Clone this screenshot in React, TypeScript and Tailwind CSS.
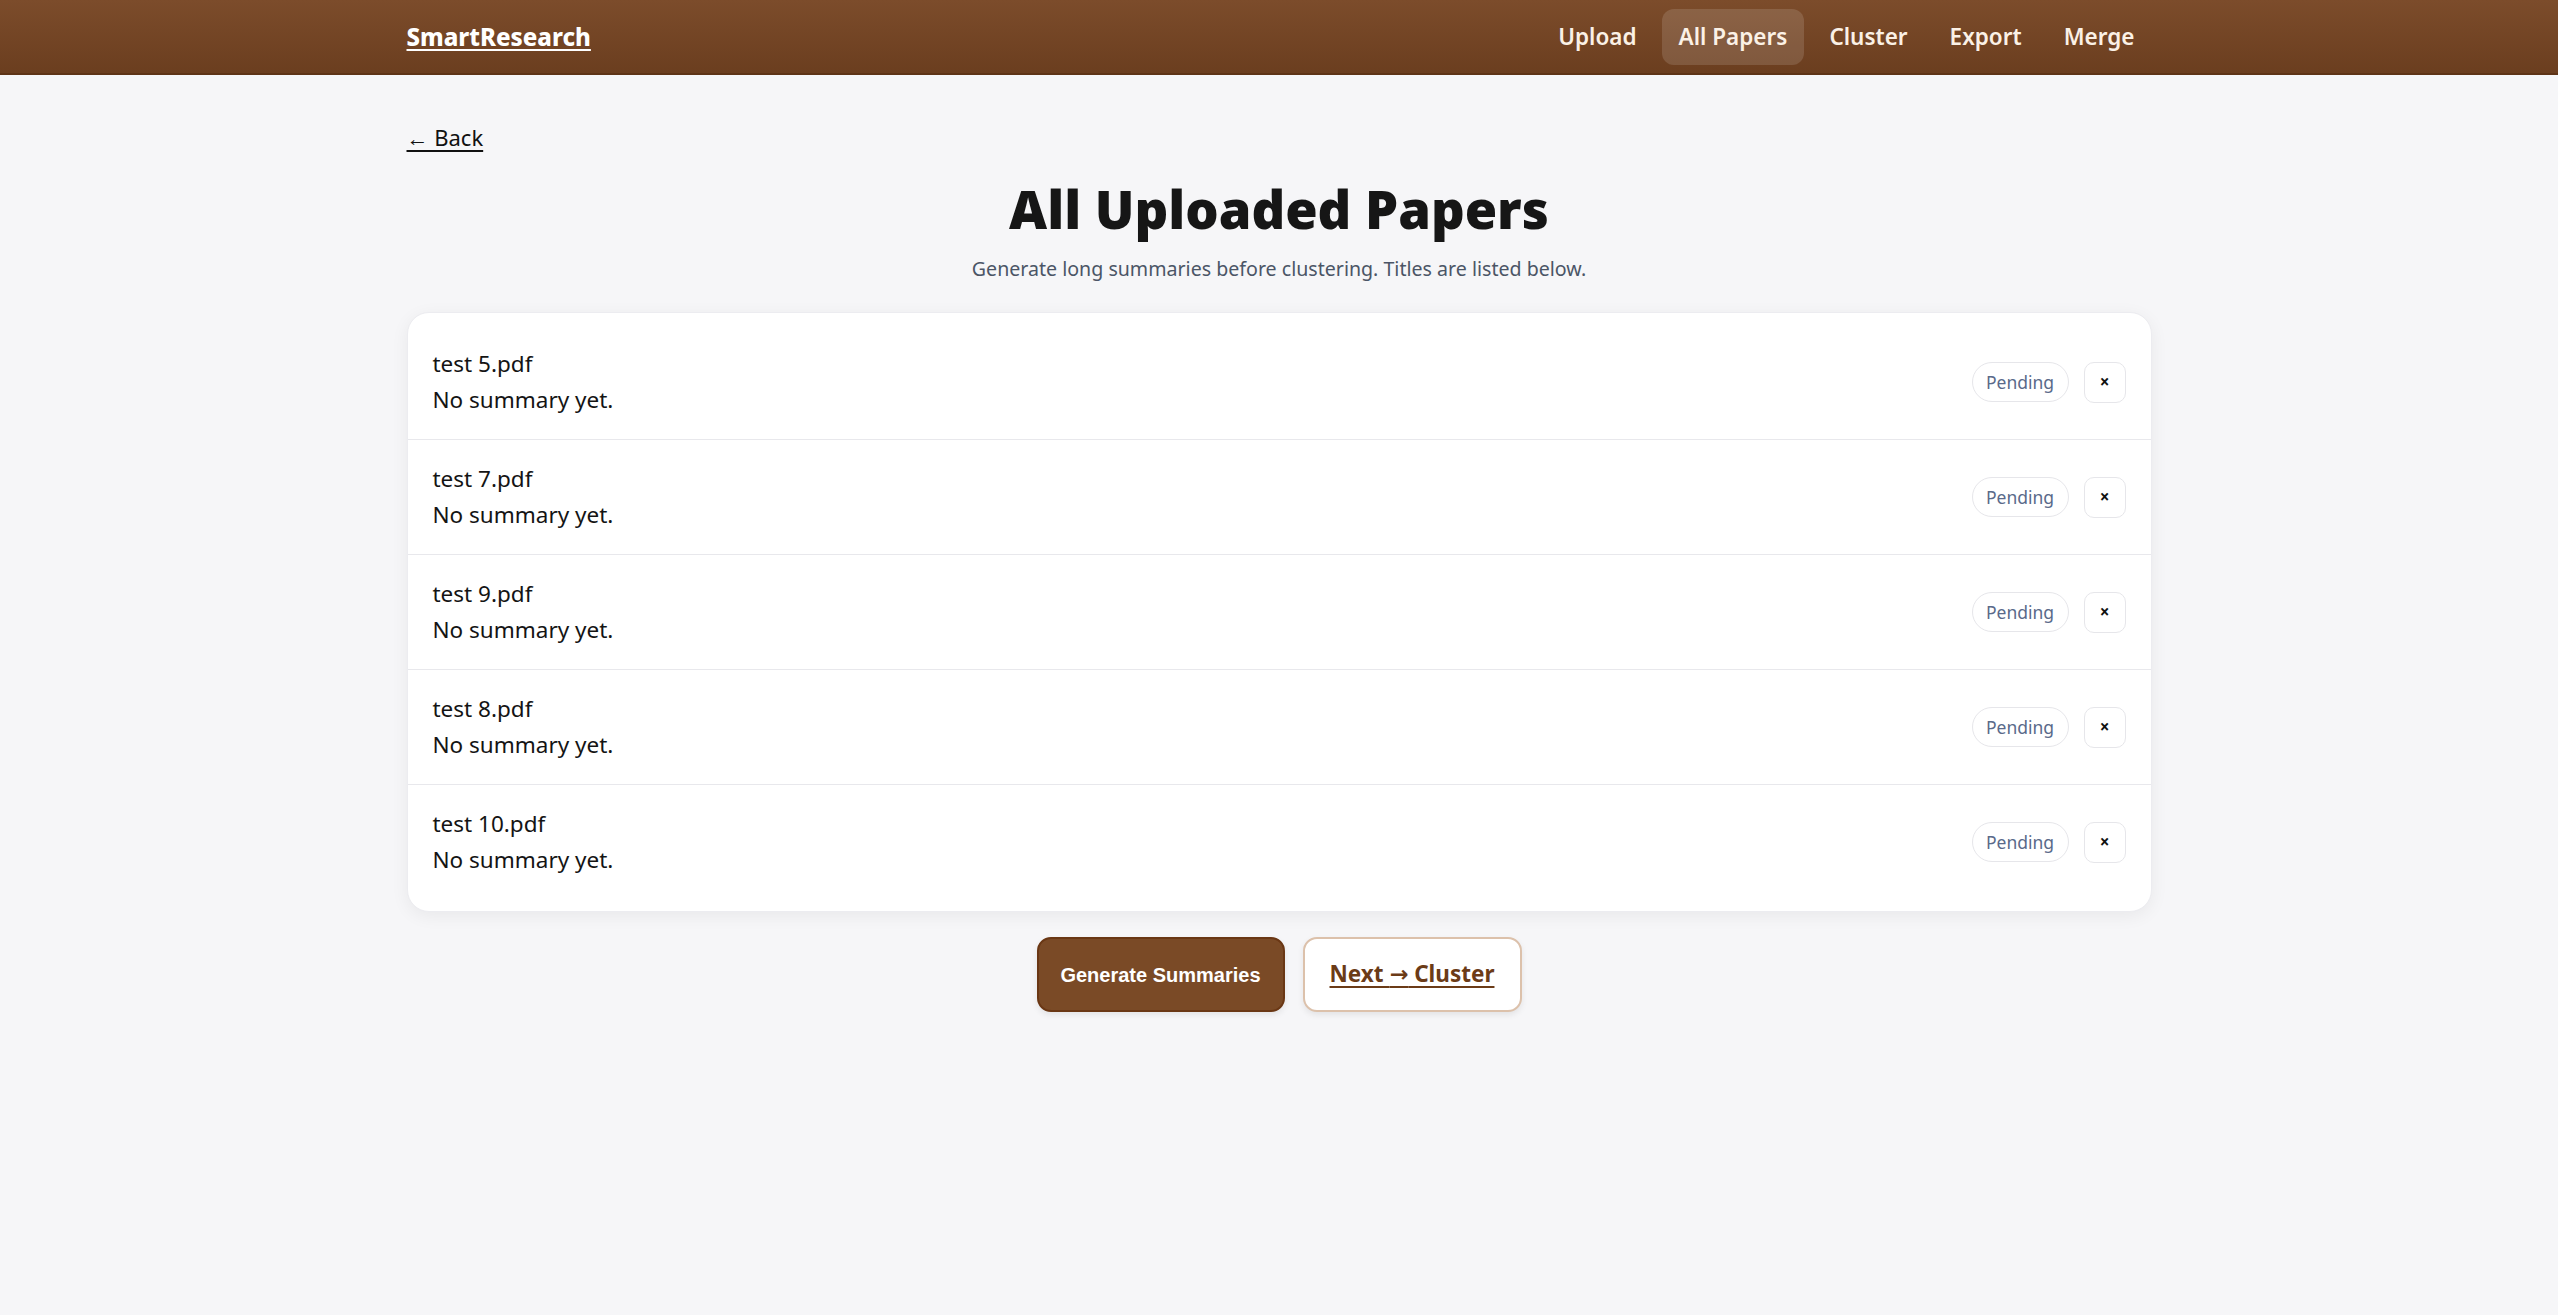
import React from "react";

const navItems = ["Upload", "All Papers", "Cluster", "Export", "Merge"];

const papers = [
  { name: "test 5.pdf", summary: "No summary yet.", status: "Pending" },
  { name: "test 7.pdf", summary: "No summary yet.", status: "Pending" },
  { name: "test 9.pdf", summary: "No summary yet.", status: "Pending" },
  { name: "test 8.pdf", summary: "No summary yet.", status: "Pending" },
  { name: "test 10.pdf", summary: "No summary yet.", status: "Pending" },
];

const PaperRow = ({
  name,
  summary,
  status,
  last,
}: {
  name: string;
  summary: string;
  status: string;
  last: boolean;
}) => {
  return (
    <div
      className={`flex items-center justify-between px-[25px] py-[21px] ${
        last ? "" : "border-b border-[#e8e8ec]"
      }`}
    >
      <div className="text-[22.5px] leading-[36px] text-[#141414]">
        <div>{name}</div>
        <div>{summary}</div>
      </div>

      <div className="flex items-center gap-[15px]">
        <span className="flex h-[40px] w-[97px] items-center justify-center rounded-full border border-[#e6e6ea] text-[17.5px] text-[#5a6a8a]">
          {status}
        </span>
        <button className="flex h-[41px] w-[42px] items-center justify-center rounded-[10px] border border-[#e6e6ea] bg-white text-[17px] font-bold text-[#111]">
          ×
        </button>
      </div>
    </div>
  );
};

export default function App() {
  return (
    <div className="min-h-screen bg-[#f6f6f8] font-['Noto_Sans',_'Open_Sans',sans-serif]">
      {/* Top bar */}
      <header className="h-[75px] border-b-2 border-[#5e3417] bg-gradient-to-b from-[#7c4c2b] to-[#6b3e1f]">
        <div className="mx-auto flex h-full w-[1745px] items-center justify-between">
          <a className="text-[24px] font-extrabold text-white underline underline-offset-[3px]">
            SmartResearch
          </a>

          <nav className="flex items-center gap-[8px]">
            {navItems.map((item) => (
              <a
                key={item}
                className={`rounded-[12px] px-[17px] py-[13px] text-[22.5px] font-semibold leading-[30px] text-[#fbf1e6] ${
                  item === "All Papers" ? "bg-white/[0.13]" : ""
                }`}
              >
                {item}
              </a>
            ))}
          </nav>
        </div>
      </header>

      <main className="mx-auto w-[1745px]">
        <a className="mt-[46px] inline-block text-[22px] leading-[33px] text-[#111] underline underline-offset-[4px]">
          ← Back
        </a>

        <h1 className="mt-[24px] text-center text-[52.5px] font-black leading-[62px] text-[#161616]">
          All Uploaded Papers
        </h1>
        <p className="mt-[14px] text-center text-[19.6px] leading-[30px] text-[#4b5566]">
          Generate long summaries before clustering. Titles are listed below.
        </p>

        {/* Papers list */}
        <div className="mt-[28px] rounded-[22px] border border-[#ececf0] bg-white py-[12px] shadow-[0_4px_18px_rgba(0,0,0,0.06)]">
          {papers.map((p, i) => (
            <PaperRow
              key={p.name}
              name={p.name}
              summary={p.summary}
              status={p.status}
              last={i === papers.length - 1}
            />
          ))}
        </div>

        <div className="mt-[25px] flex justify-center gap-[18px]">
          <button className="h-[75px] w-[248px] rounded-[14px] border-2 border-[#6a3714] bg-[#7a4a26] font-['Liberation_Sans',sans-serif] text-[20px] font-bold text-white shadow-[0_3px_6px_rgba(0,0,0,0.08)]">
            Generate Summaries
          </button>
          <button className="h-[75px] w-[219px] rounded-[14px] border-2 border-[#dcc1ab] bg-white text-[22.5px] font-bold text-[#6b3b17] underline underline-offset-[4px] shadow-[0_3px_6px_rgba(0,0,0,0.08)]">
            Next <span className="font-['DejaVu_Sans',sans-serif]">→</span> Cluster
          </button>
        </div>
      </main>
    </div>
  );
}
